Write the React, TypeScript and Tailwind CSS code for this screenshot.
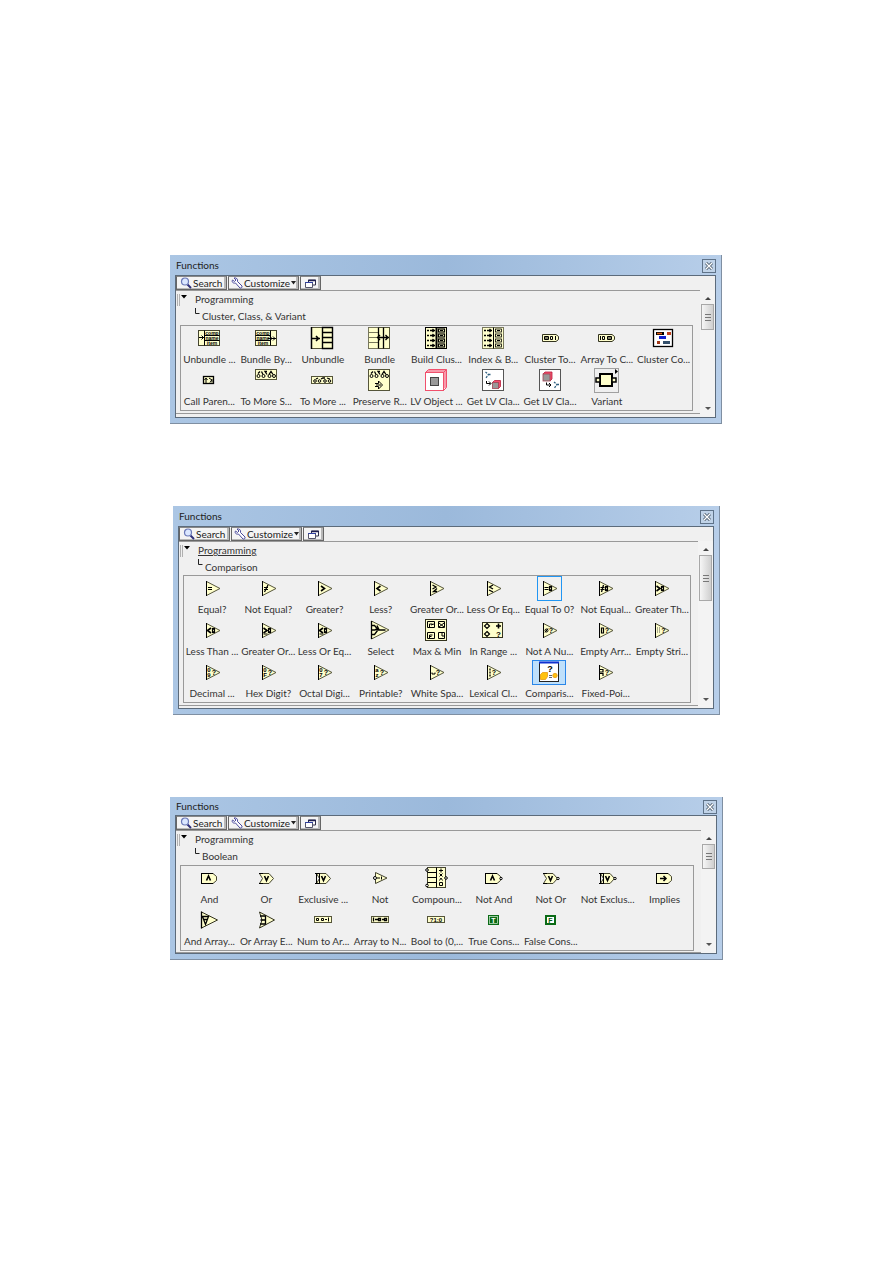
import { useState } from 'react';
import type { ReactNode } from 'react';
import clsx from 'clsx';

type tItem = {
    label: string;
    icon: ReactNode;
    frame?: 'outline' | 'filled';
}
type tPalette = {
    id: string;
    category: string;
    margin: string;
    titleHeight: string;
    treeHeight: string;
    footer: string;
    thumb: string;
    underline?: boolean;
    items: tItem[];
}

const CREAM = '#ffffcc';

/* every glyph is drawn around 0,0 on a 25px canvas */
const Icon = ({ children }: { children: ReactNode }) => (
    <svg width="25" height="25" viewBox="-12 -12 25 25" fill="none" stroke="#000" strokeWidth="1" aria-hidden="true" className="block shrink-0 overflow-visible">
        {children}
    </svg>
)

const Mark = ({ x, y, size = 7, children }: { x: number; y: number; size?: number; children: ReactNode }) => (
    <text x={x} y={y} fontSize={size} fontWeight="700" fill="#000" stroke="none" textAnchor="middle" fontFamily="'Liberation Sans', sans-serif">{children}</text>
)

const Tri = ({ children }: { children?: ReactNode }) => (
    <Icon>
        <path d="M-5.5 -6.5L8 .5L-5.5 7.5z" fill={CREAM} stroke="#55553a" />
        <path d="M-5.5 -7V8" />
        <g transform="translate(0 .5)">{children}</g>
    </Icon>
)

const Eq = ({ x = -4 }: { x?: number }) => <path d={`M${x} -1h4M${x} 1h4`} strokeWidth="1.2" />
const Zero = ({ x = 0 }: { x?: number }) => <rect x={x + 0.5} y="-2" width="2" height="4" strokeWidth="1.2" />
const Gt = ({ x = -3 }: { x?: number }) => <path d={`M${x} -2.5l3.5 2.5l-3.5 2.5`} strokeWidth="1.6" />
const Lt = ({ x = -3 }: { x?: number }) => <path d={`M${x + 3.5} -2.5l-3.5 2.5l3.5 2.5`} strokeWidth="1.6" />

/* "comp / name / item" node, arrow on the left or on the right */
const ByName = ({ right }: { right?: boolean }) => {
    const x = right ? -10.5 : -4.5;
    return <Icon>
        <rect x="-10.5" y="-7.5" width="21" height="15" fill={CREAM} stroke="#44442f" />
        <path d={right ? 'M4.5 -7.5V7.5M-10.5 -2.5h15M-10.5 2.5h15' : 'M-4.5 -7.5V7.5M-4.5 -2.5h15M-4.5 2.5h15'} />
        <path d={right ? 'M2 .5h8M4 -1.5l2 2l-2 2M7 -1.5l2 2l-2 2' : 'M-10 -.5h5M-7.5 -2.5l2 2l-2 2'} />
        <Mark x={x + 7.5} y={-3.5} size={5}>comp</Mark>
        <Mark x={x + 7.5} y={1.5} size={5}>name</Mark>
        <Mark x={x + 7.5} y={6.5} size={5}>item</Mark>
    </Icon>
}

const Rows = ({ x, light }: { x: number; light?: boolean }) => (
    <path d={`M${x} -10.5h10v21h-10zM${x} -5.5h10M${x} -.5h10M${x} 4.5h10`} stroke={light ? '#77775c' : '#000'} strokeWidth={light ? 1 : 1.4} />
)

const ClusterArray = ({ dim }: { dim?: boolean }) => (
    <Icon>
        <rect x="-10.5" y="-10.5" width="21" height="21" fill={CREAM} stroke={dim ? '#77775c' : '#000'} />
        <path d="M.5 -10.5v21" strokeWidth={dim ? 1 : 2} />
        {[-7.5, -2.5, 2.5, 7.5].map((y) => (
            <g key={y}>
                <path d={`M-9 ${y}h2M-6 ${y}h5M-3.5 ${y - 1.5}l1.5 1.5l-1.5 1.5`} strokeWidth="1.3" />
                <rect x="2.5" y={y - 1.5} width="6" height="3" strokeWidth={dim ? 0.8 : 1.2} />
                <path d={`M4 ${y}h3`} />
            </g>
        ))}
    </Icon>
)

const ClusterToArray = ({ flip }: { flip?: boolean }) => (
    <Icon>
        <path d="M-7.5 -3.5H6L8.5 -1.5V1.5L6 3.5H-7.5z" fill={CREAM} stroke="#33331f" />
        {flip
            ? <path d="M-5.5 -2v4M-3.5 -1.5h2v3h-2zM1.5 -1.5h4v3h-4zM1.5 0h4" />
            : <path d="M-5.5 -1.5h4v3h-4zM-5.5 0h4M.5 -1.5v3h2v-3zM5.5 -2v4" />}
    </Icon>
)

/* chain of little circles used by the class nodes */
const Chain = ({ y = 0 }: { y?: number }) => (
    <g transform={`translate(0 ${y})`}>
        <circle cx="-7.5" cy="1.5" r="1.5" /><circle cx="-2.5" cy="1.5" r="1.5" />
        <circle cx="3.5" cy="1.5" r="1.5" /><circle cx="8" cy="1.5" r="1.5" />
        <path d="M-8 -1l2 -2M-4.5 -3l1.5 3M1 0l-2 -3h2M3 0l2 -3l2 3" strokeWidth="1.3" />
    </g>
)

const Cube = ({ x, y, s }: { x: number; y: number; s: number }) => (
    <g>
        <path d={`M${x} ${y}l2 -2h${s}v${s}l-2 2z`} fill="#f4506e" stroke="#b8203c" strokeWidth=".8" />
        <rect x={x} y={y} width={s} height={s} fill="#999" stroke="#a04454" strokeWidth=".8" />
    </g>
)

const ClassBox = ({ children }: { children: ReactNode }) => (
    <Icon>
        <rect x="-10.5" y="-10.5" width="21" height="21" fill="#fff" stroke="#555" />
        {children}
    </Icon>
)

const Digits = ({ top, bottom }: { top: string; bottom: string }) => (
    <Tri>
        <Mark x={-3} y={-0.5} size={6}>{top}</Mark>
        <Mark x={-3} y={4.5} size={6}>{bottom}</Mark>
        <Mark x={2} y={2.5} size={7}>?</Mark>
    </Tri>
)

const AndGate = ({ dot, children }: { dot?: boolean; children: ReactNode }) => (
    <Icon>
        <path d="M-7.5 -4.5H4L7.5 -1.5V2.5L4 5.5H-7.5z" fill={CREAM} stroke="#44442f" />
        <path d="M-7.5 -5V6M-8 -4.5H4M-8 5.5H4" />
        {dot && <circle cx="8" cy=".5" r="1.2" fill="#fff" />}
        {children}
    </Icon>
)

const OrGate = ({ dot, exclusive }: { dot?: boolean; exclusive?: boolean }) => (
    <Icon>
        <path d="M-6.5 -4.5H3L7.5 .5L3 5.5H-6.5L-3.5 .5z" fill={CREAM} stroke="#44442f" />
        <path d="M-7 -4.5h4M-7 5.5h4" />
        {exclusive && <path d="M-8 -4.5h3M-8 5.5h3M-6.5 -4.5v10M-3.5 -4.5v10" />}
        <path d="M-1.5 -2L.5 2.5L2.5 -2" strokeWidth="1.6" />
        {dot && <circle cx="8" cy=".5" r="1.2" fill="#fff" />}
    </Icon>
)

const Strip = ({ children }: { children: ReactNode }) => (
    <Icon>
        <rect x="-8.5" y="-3.5" width="17" height="6" fill={CREAM} stroke="#55553a" />
        {children}
    </Icon>
)

const Constant = ({ letter, filled }: { letter: string; filled?: boolean }) => (
    <Icon>
        <rect x="-4" y="-4" width="9" height="8" fill={filled ? '#0a6b16' : '#fff'} stroke="#0a6b16" strokeWidth="2" />
        {filled && <rect x="-3.5" y="-3.5" width="8" height="7" stroke="#d8f0d8" strokeWidth=".7" />}
        <text x=".5" y="2.500" fontSize="7" fontWeight="700" textAnchor="middle" stroke="none" fill={filled ? '#fff' : '#0a5a12'} fontFamily="'Liberation Sans', sans-serif">{letter}</text>
    </Icon>
)

const clusterItems: tItem[] = [
    { label: 'Unbundle ...', icon: <ByName /> },
    { label: 'Bundle By...', icon: <ByName right /> },
    {
        label: 'Unbundle',
        icon: <Icon><rect x="-10.5" y="-10.5" width="21" height="21" fill={CREAM} stroke="#55553a" /><Rows x={0.5} /><path d="M-10.5 -11v22M-10 .5h8M-6 -2l2.5 2.5l-2.5 2.5" strokeWidth="1.5" /></Icon>,
    },
    {
        label: 'Bundle',
        icon: <Icon><rect x="-10.5" y="-10.5" width="21" height="21" fill={CREAM} stroke="#55553a" /><Rows x={-10.5} light /><path d="M-.5 -10.5v21M4.5 -10.5v21M-2 -.5h12M1 -3l-2.5 2.5l2.500 2.5M6.5 -3l2.5 2.5l-2.5 2.5" strokeWidth="1.3" /></Icon>,
    },
    { label: 'Build Clus...', icon: <ClusterArray /> },
    { label: 'Index & B...', icon: <ClusterArray dim /> },
    { label: 'Cluster To...', icon: <ClusterToArray /> },
    { label: 'Array To C...', icon: <ClusterToArray flip /> },
    {
        label: 'Cluster Co...',
        icon: <Icon>
            <rect x="-9.5" y="-8.5" width="19" height="17" fill="#fff" strokeWidth="1.3" />
            <path d="M-7 -4.5h8" stroke="#000" strokeWidth="3" /><path d="M-6 -4.5h5" stroke="#e05a10" strokeWidth="1.5" />
            <path d="M4 -4.5h4" stroke="#c0401c" strokeWidth="3" />
            <path d="M-4 -.5h7" stroke="#1020d0" strokeWidth="3" />
            <path d="M-6 4.5h3" stroke="#a03818" strokeWidth="3" /><path d="M0 4.5h7" stroke="#34506c" strokeWidth="3" />
        </Icon>,
    },
    {
        label: 'Call Paren...',
        icon: <Icon><rect x="-5.5" y="-3.5" width="10" height="7" fill={CREAM} strokeWidth="1.3" /><path d="M-3 3v-4M-4.5 0l1.5 -2l1.5 2M0 -2l3 2M1 2.5l2 -3v3" /></Icon>,
    },
    {
        label: 'To More S...',
        icon: <Icon><rect x="-10.5" y="-10.5" width="21" height="10" fill={CREAM} stroke="#55553a" /><Chain y={-5.5} /></Icon>,
    },
    {
        label: 'To More ...',
        icon: <Icon><rect x="-10.5" y="-3.5" width="21" height="7" fill={CREAM} stroke="#55553a" /><circle cx="-7" cy="1" r="1.3" /><circle cx="-2.5" cy="1" r="1.3" /><circle cx="3" cy="1" r="1.3" /><circle cx="7.5" cy="1" r="1.3" /><path d="M-6 -1l2 -1M-1 -1l2 -1h2M5 -2l3 1" strokeWidth="1.3" /></Icon>,
    },
    {
        label: 'Preserve R...',
        icon: <Icon><rect x="-10.5" y="-10.5" width="21" height="21" fill={CREAM} stroke="#55553a" /><Chain y={-5.5} /><path d="M-4 3.5h3.500v-2.5l4 4l-4 4v-2.5h-3.500M-3 5h5" /></Icon>,
    },
    {
        label: 'LV Object ...',
        icon: <Icon>
            <path d="M-10.5 -7.5l3 -3h18v18l-3 3z" fill="#ffe4ea" stroke="#f0506c" />
            <rect x="-10.5" y="-7.5" width="18" height="18" fill="#fff" stroke="#f0506c" />
            <path d="M7.5 -7.5l3 -3M-9 -9h18v17" stroke="#f0506c" />
            <rect x="-5.5" y="-2.5" width="8" height="8" fill="#999" stroke="#444" />
        </Icon>,
    },
    {
        label: 'Get LV Cla...',
        icon: <ClassBox><path d="M-7.5 -8l3 2.500l-3 4M-4.5 -5.500h2" stroke="#306080" strokeWidth="1.300" strokeDasharray="2 1" /><path d="M-6.5 1v2.5h4M-4 1.500l2 2l-2 2" /><Cube x={-0.5} y={2.5} s={6} /></ClassBox>,
    },
    {
        label: 'Get LV Cla...',
        icon: <ClassBox><Cube x={-7} y={-6} s={7} /><path d="M-3.5 2.500v2.5h4M-1 3l2 2l-2 2" /><path d="M4 2l3 2.500l-3 4M7 4.500h2" stroke="#306080" strokeWidth="1.300" strokeDasharray="2 1" /></ClassBox>,
    },
    {
        label: 'Variant',
        icon: <Icon>
            <rect x="-11.5" y="-11.5" width="24" height="24" fill="#efefef" stroke="#a0a0a0" />
            <rect x="-6" y="-6" width="12" height="12" fill={CREAM} strokeWidth="2" />
            <rect x="-10" y="-2" width="4" height="4" fill={CREAM} strokeWidth="1.5" />
            <rect x="6" y="-2" width="4" height="4" fill={CREAM} strokeWidth="1.5" />
            <path d="M9 -11l3 2.5l-3 2.5z" fill="#000" stroke="none" />
        </Icon>,
    },
]

const comparisonItems: tItem[] = [
    { label: 'Equal?', icon: <Tri><Eq /></Tri> },
    { label: 'Not Equal?', icon: <Tri><Eq x={-4} /><path d="M0 -3.5l-3.500 7" strokeWidth="1.300" /></Tri> },
    { label: 'Greater?', icon: <Tri><Gt /></Tri> },
    { label: 'Less?', icon: <Tri><Lt /></Tri> },
    { label: 'Greater Or...', icon: <Tri><path d="M-3.5 -3.5l3.5 2l-3.5 2M1 0l-3.5 3h3.5" strokeWidth="1.3" /></Tri> },
    { label: 'Less Or Eq...', icon: <Tri><path d="M0 -3.5l-3.5 2l3.5 2M-4 1.5l4 2" strokeWidth="1.3" /></Tri> },
    { label: 'Equal To 0?', icon: <Tri><Eq x={-4.5} /><Zero /></Tri>, frame: 'outline' },
    { label: 'Not Equal...', icon: <Tri><Eq x={-4.5} /><path d="M-1.5 -3.5l-2 7" strokeWidth="1.300" /><Zero /></Tri> },
    { label: 'Greater Th...', icon: <Tri><Gt x={-4.5} /><Zero /></Tri> },
    { label: 'Less Than ...', icon: <Tri><Lt x={-4.5} /><Zero /></Tri> },
    { label: 'Greater Or...', icon: <Tri><Gt x={-4.5} /><path d="M-4.5 3.5h4" /><Zero /></Tri> },
    { label: 'Less Or Eq...', icon: <Tri><Lt x={-4.5} /><path d="M-4.5 3.5h4" /><Zero /></Tri> },
    {
        label: 'Select',
        icon: <Icon>
            <path d="M-8.5 -9L9 0L-8.5 9z" fill={CREAM} stroke="#55553a" />
            <path d="M-8.5 -9V9M-8.5 -4.5h3l4 4.500h7M-8.5 4.5h3l3 -4M-8.5 0h4M-3 -4.500l2 4l-4 0" strokeWidth="1.3" />
        </Icon>,
    },
    {
        label: 'Max & Min',
        icon: <Icon>
            <rect x="-10.5" y="-10.5" width="21" height="21" fill={CREAM} stroke="#33331f" />
            <path d="M-8.5 -8.5h7v6h-7zM2.5 -8.5h6v6h-6zM-8.5 2.5h7v6h-7zM2.5 2.5h6v6h-6z" />
            <path d="M-6.500 -3v-3h3M-5 -5l3 -1M3 -7l5 4M8 -7l-5 4M-6.500 8v-3h3M-6.500 6.500h2M6 3v3h2" />
        </Icon>,
    },
    {
        label: 'In Range ...',
        icon: <Icon>
            <rect x="-10.5" y="-7.5" width="20" height="15" fill={CREAM} stroke="#33331f" />
            <path d="M-6 -6.500l2.5 2.5l-2.5 2.5l-2.5 -2.5zM-6 1.500l2.5 2.5l-2.5 2.5l-2.5 -2.5z" strokeWidth="1.200" />
            <path d="M3 -4h5M5.5 -6.500v5" strokeWidth="1.6" />
            <Mark x={5.5} y={6.5} size={8}>?</Mark>
        </Icon>,
    },
    { label: 'Not A Nu...', icon: <Tri><circle cx="-2.5" cy="0" r="1.5" /><path d="M-1 -2l-3 4" /><Mark x={2} y={2.5}>?</Mark></Tri> },
    { label: 'Empty Arr...', icon: <Tri><path d="M-3.5 -2.5h2v5h-2z" strokeWidth="1.200" /><Mark x={2} y={2.5}>?</Mark></Tri> },
    { label: 'Empty Stri...', icon: <Tri><path d="M-3.5 -3v6M-1.5 -3v6" stroke="#555" strokeDasharray="1 1" /><Mark x={2.5} y={2.5}>?</Mark></Tri> },
    { label: 'Decimal ...', icon: <Digits top="0" bottom="9" /> },
    { label: 'Hex Digit?', icon: <Digits top="0" bottom="F" /> },
    { label: 'Octal Digi...', icon: <Digits top="0" bottom="7" /> },
    { label: 'Printable?', icon: <Digits top="a" bottom="z" /> },
    { label: 'White Spa...', icon: <Tri><path d="M-4 0v1.5h3v-1.5" /><Mark x={2} y={2.5}>?</Mark></Tri> },
    { label: 'Lexical Cl...', icon: <Tri><path d="M-3 -4v8" strokeWidth="1.3" strokeDasharray="2 1" /><Mark x={1} y={2.5}>?</Mark></Tri> },
    {
        label: 'Comparis...',
        frame: 'filled',
        icon: <Icon>
            <rect x="-9.5" y="-9.5" width="19" height="19" fill="#fff" stroke="#222" />
            <path d="M-10 -9.5h20" stroke="#1030d0" strokeWidth="2" />
            <path d="M-8.5 2.500l2 -2h5v4l-2 3h-5z" fill="#ffc20e" stroke="#e89a10" strokeWidth=".8" />
            <circle cx="6" cy="3.500" r="2.200" fill="#ffc20e" stroke="#e89a10" strokeWidth=".8" />
            <path d="M0 3.500h3M0 5.500h3" stroke="#666" />
            <Mark x={1} y={0} size={9}>?</Mark>
        </Icon>,
    },
    { label: 'Fixed-Poi...', icon: <Tri><path d="M-5 -3h3v2.500h-3M-5 1h3v2.5" strokeWidth="1.2" /><Mark x={2} y={2.5}>?</Mark></Tri> },
]

const booleanItems: tItem[] = [
    { label: 'And', icon: <AndGate><path d="M-2.500 2.5L-.5 -2L1.500 2.5" strokeWidth="1.6" /></AndGate> },
    { label: 'Or', icon: <OrGate /> },
    { label: 'Exclusive ...', icon: <OrGate exclusive /> },
    {
        label: 'Not',
        icon: <Icon><path d="M-4.5 -5.5L7 0L-4.5 5.5z" fill={CREAM} stroke="#44442f" /><path d="M-3 0h3M1.5 -1.5v3" /><circle cx="-5" cy="0" r="1.5" fill="#fff" /></Icon>,
    },
    {
        label: 'Compoun...',
        icon: <Icon>
            <rect x="-8.5" y="-10.5" width="18" height="20" fill={CREAM} stroke="#44442f" />
            <path d="M-8.5 -5.5h9M-8.5 -.5h9M-8.5 4.5h9M.5 -10.5v20" />
            <circle cx="-9" cy="-8" r="1.300" fill="#fff" /><circle cx="-9" cy="7.500" r="1.300" fill="#fff" /><circle cx="10" cy="0" r="1.300" fill="#fff" />
            <path d="M3 -7.500h4M5 -9.500v4M3.500 -4.500l3 3M6.500 -4.500l-3 3M3.500 2.500l1.500 -2.500l1.5 2.500M3.500 4.500h3v3h-3z" />
        </Icon>,
    },
    { label: 'Not And', icon: <AndGate dot><path d="M-2.500 2.5L-.5 -2L1.500 2.5" strokeWidth="1.6" /></AndGate> },
    { label: 'Not Or', icon: <OrGate dot /> },
    { label: 'Not Exclus...', icon: <OrGate dot exclusive /> },
    { label: 'Implies', icon: <AndGate><path d="M-4 .5h6M-.5 -2l2.5 2.5l-2.5 2.5" strokeWidth="1.5" /></AndGate> },
    {
        label: 'And Array...',
        icon: <Icon><path d="M-7.5 -8L8.5 0L-7.5 8z" fill={CREAM} stroke="#33331f" /><path d="M-7.5 -8.5V8.5M-6.5 -3.5L-3.5 4.5L-.5 -3.5zM-5.5 -.5h4" strokeWidth="1.3" /></Icon>,
    },
    {
        label: 'Or Array E...',
        icon: <Icon><path d="M-6.5 -8L8.5 0L-6.5 8L-4 0z" fill={CREAM} stroke="#33331f" /><path d="M-6 -4h5.500v8h-5.500M-5.500 0h5" strokeWidth="1.3" /></Icon>,
    },
    { label: 'Num to Ar...', icon: <Strip><path d="M-6.5 -1.5h2v2h-2zM-1.5 -1.5h2v2h-2zM2 -.5h2M5.500 -2.5v4" /></Strip> },
    { label: 'Array to N...', icon: <Strip><path d="M-6.5 -2.5v4M-5 -.5h3M-1.5 -1.5h2v2h-2zM2 -.5h2M4.500 -1.5h2v2h-2z" strokeWidth="1.3" /></Strip> },
    { label: 'Bool to (0,...', icon: <Strip><Mark x={0} y={1.5} size={6}>?1:0</Mark></Strip> },
    { label: 'True Cons...', icon: <Constant letter="T" filled /> },
    { label: 'False Cons...', icon: <Constant letter="F" /> },
]

const palettes: tPalette[] = [
    {
        id: 'cluster', category: 'Cluster, Class, & Variant', margin: 'mr-px', titleHeight: 'h-5', treeHeight: 'h-[34px]',
        footer: 'border-b mb-[3px] pb-[2px]', thumb: 'h-[26px]', items: clusterItems,
    },
    {
        id: 'comparison', category: 'Comparison', margin: 'mx-[3px]', titleHeight: 'h-5', treeHeight: 'h-[33px]',
        footer: 'border-b mb-[2px] pb-[2px]', thumb: 'h-[46px]', underline: true, items: comparisonItems,
    },
    {
        id: 'boolean', category: 'Boolean', margin: 'mx-0', titleHeight: 'h-[18px]', treeHeight: 'h-[34px]',
        footer: 'border-b pb-px', thumb: 'h-[25px]', items: booleanItems,
    },
]

const toolButton = 'flex h-[14px] items-center border border-[#666] border-t-[#888] bg-[#f4f4f4] text-[#222] shadow-[inset_-2px_-1px_0_#b8b8b8]'

const Toolbar = () => (
    <div className="flex h-[14px] gap-px">
        <button className={clsx(toolButton, 'w-[51px] gap-px pl-[3px]')}>
            <svg width="12" height="12" viewBox="0 0 12 12" fill="none" aria-hidden="true">
                <path d="M7.5 7.5L11 11" stroke="#30307a" strokeWidth="2" />
                <circle cx="5" cy="4.5" r="3.5" fill="#dbe7ff" stroke="#6a78b8" strokeWidth="1.2" />
            </svg>
            Search
        </button>
        <button className={clsx(toolButton, 'w-[71px] gap-px pl-[2px]')}>
            <svg width="12" height="12" viewBox="0 0 12 12" fill="#fff" stroke="#4a4a9c" strokeWidth="1" aria-hidden="true">
                <path d="M3 1L5 3L3.5 4.5L1.5 3C.5 5 2 6.5 4.5 6L9 11C10 11.5 11.5 10.5 11 9L6.5 4.5C7 2 5.5 .5 3 1z" />
            </svg>
            Customize
            <svg width="5" height="4" viewBox="0 0 5 4" aria-hidden="true"><path d="M0 0h5L2.5 3.5z" fill="#222" /></svg>
        </button>
        <button aria-label="Change visible palettes" className={clsx(toolButton, 'w-[21px] pl-1')}>
            <svg width="11" height="9" viewBox="0 0 11 9" fill="#fff" aria-hidden="true">
                <path d="M3.5 1h7v5h-7z" stroke="#30304a" /><path d="M3 1.5h8" stroke="#202050" strokeWidth="1.5" />
                <path d="M.5 3.5h7v5h-7z" stroke="#55556a" /><path d="M0 3.5h8" stroke="#3040a0" />
            </svg>
        </button>
    </div>
)

const ScrollBar = ({ thumb }: { thumb: string }) => (
    <div className="flex w-[15px] shrink-0 flex-col items-center bg-[#f3f3f3] pt-[2px] pb-1">
        <button aria-label="Scroll up" className="flex h-3 items-center">
            <svg width="6" height="3" viewBox="0 0 6 3"><path d="M0 3L3 0L6 3z" fill="#444" /></svg>
        </button>
        <div className={clsx('flex w-[13px] items-center justify-center border border-[#a8a8a8] bg-linear-to-r from-[#f6f6f6] to-[#cfcfcf]', thumb)}>
            <svg width="6" height="7" viewBox="0 0 6 7"><path d="M0 .5h6M0 3.5h6M0 6.5h6" stroke="#777" /></svg>
        </div>
        <button aria-label="Scroll down" className="mt-auto flex h-[10px] items-center">
            <svg width="6" height="3" viewBox="0 0 6 3"><path d="M0 0L3 3L6 0z" fill="#555" /></svg>
        </button>
    </div>
)

const Palette = ({ palette }: { palette: tPalette }) => {
    const [open, setOpen] = useState<boolean>(true);

    return <section
        aria-labelledby={palette.id}
        className={clsx('border-r border-b border-[#7f8fa2] bg-linear-to-r from-[#abc6e4] via-[#9bb9db] to-[#b7cee9] pr-[5px] pb-[5px] pl-[5px]', palette.margin)}
    >
        <header className={clsx('flex items-center justify-between pl-px', palette.titleHeight)}>
            <h2 id={palette.id} className="text-[#222]">Functions</h2>
            <button aria-label="Close" className="mt-[2px] flex size-[14px] items-center justify-center border border-[#5f7389] bg-[#c0d3e8]">
                <svg width="8" height="8" viewBox="0 0 8 8"><path d="M1 1l6 6M7 1l-6 6" stroke="#4a5a6a" strokeWidth="3" /><path d="M1 1l6 6M7 1l-6 6" stroke="#fff" strokeWidth="1.3" /></svg>
            </button>
        </header>
        <div className="border border-[#5c6b7b] bg-[#f0f0f0]">
            <Toolbar />
            <div className="flex">
                <div className={clsx('min-w-0 flex-1 border-t border-[#999]', palette.footer)}>
                    <div className={clsx('flex gap-px pl-px', palette.treeHeight)}>
                        <div className="mt-[3px] h-3 w-[3px] border-x border-[#b0b0b0]" />
                        <button aria-label="Toggle category" className="flex h-3 w-[13px] items-center" onClick={() => setOpen(!open)}>
                            <svg width="6" height="4" viewBox="0 0 6 4"><path d="M0 0h6L3 3.5z" fill="#000" /></svg>
                        </button>
                        <div className="leading-[17px]">
                            <div className={clsx(palette.underline && 'underline')}>Programming</div>
                            <div className="flex gap-[2px]">
                                <svg width="5" height="7" viewBox="0 0 5 7"><path d="M.5 0v5.5h4" fill="none" stroke="#222" /></svg>
                                {palette.category}
                            </div>
                        </div>
                    </div>
                    {open && <ul className="mr-[7px] ml-1 grid grid-cols-9 gap-y-px border border-[#999] pb-px">
                        {palette.items.map((v, i) => (
                            <li key={i}>
                                <button className="flex w-full flex-col items-center">
                                    <span className={clsx(
                                        'flex h-[25px] items-center justify-center',
                                        v.frame === 'outline' && 'w-[25px] border border-[#2196f3]',
                                        v.frame === 'filled' && 'w-[34px] border border-[#2a86e8] bg-[#bfe0fb]',
                                    )}>
                                        {v.icon}
                                    </span>
                                    <span className="h-4 leading-4 whitespace-nowrap">{v.label}</span>
                                </button>
                            </li>
                        ))}
                    </ul>}
                </div>
                <ScrollBar thumb={palette.thumb} />
            </div>
        </div>
    </section>
}

const App = () => (
    <main className="flex min-h-screen flex-col gap-[82px] bg-white px-[170px] pt-[255px] pb-20 font-['Lato',sans-serif] text-[10px] leading-4 text-[#333]">
        {palettes.map((v) => <Palette key={v.id} palette={v} />)}
    </main>
)

export default App;
